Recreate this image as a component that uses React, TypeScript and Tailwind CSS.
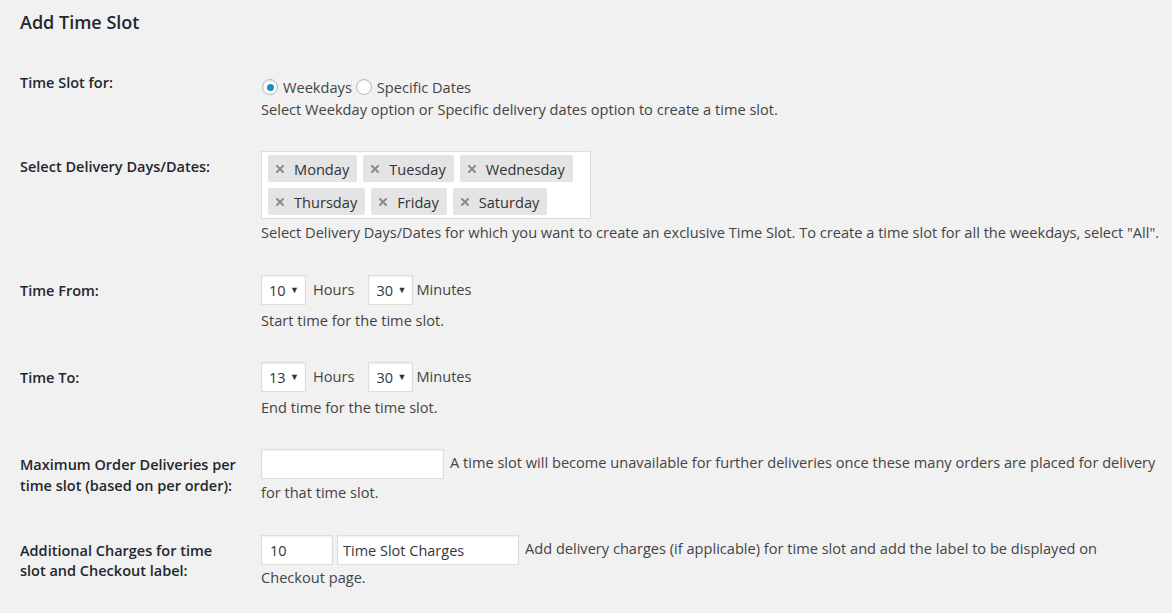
import React from 'react';

const days = [['Monday', 'Tuesday', 'Wednesday'], ['Thursday', 'Friday', 'Saturday']];

function Select({ value }: { value: string }) {
  return (
    <div className="inline-flex h-[30px] w-[45px] shrink-0 items-center justify-between border border-[#ddd] bg-white pl-[7px] pr-[6px] shadow-[inset_0_1px_2px_rgba(0,0,0,0.07)]">
      <span className="pt-[2px] text-[14.5px] text-[#32373c]">{value}</span>
      <span className="text-[9px] text-[#333]">▼</span>
    </div>
  );
}

function Row({
  label,
  children,
  className,
  labelClass = 'pt-[16px] leading-[20px]',
}: {
  label: React.ReactNode;
  children: React.ReactNode;
  className: string;
  labelClass?: string;
}) {
  return (
    <div className={`flex ${className}`}>
      <div className={`w-[241px] shrink-0 pr-[10px] text-[14.5px] font-semibold text-[#23282d] ${labelClass}`}>
        {label}
      </div>
      <div className="flex-1 pt-[10px] text-[14.6px] leading-[20px] text-[#444]">{children}</div>
    </div>
  );
}

function TimeRow({ hours, desc }: { hours: string; desc: string }) {
  return (
    <>
      <div className="flex items-center">
        <Select value={hours} />
        <span className="ml-[7px] mr-[14px] -mt-[2px]">Hours</span>
        <Select value="30" />
        <span className="ml-[3px] -mt-[2px]">Minutes</span>
      </div>
      <p className="mt-[5px]">{desc}</p>
    </>
  );
}

const inputCls =
  'inline-block h-[30px] border border-[#ddd] bg-white align-middle text-[14.5px] text-[#32373c] shadow-[inset_0_1px_2px_rgba(0,0,0,0.07)] outline-none';

export default function App() {
  return (
    <div
      className="min-h-[613px] bg-[#f1f1f1] pl-[20px] pr-[10px]"
      style={{ fontFamily: '"Open Sans", "Noto Sans", sans-serif' }}
    >
      <h2 className="pt-[10px] text-[18px] font-semibold leading-[24px] text-[#23282d]">Add Time Slot</h2>

      <div className="mt-[29px]">
        <Row label="Time Slot for:" className="h-[78px]" labelClass="pt-[10px] leading-[20px]">
          <div className="mt-[4px] flex items-center">
            <span className="mr-[5px] ml-[1px] flex h-[16px] w-[16px] items-center justify-center rounded-full border border-[#b4b9be] bg-white shadow-[inset_0_1px_2px_rgba(0,0,0,0.1)]">
              <span className="h-[7px] w-[7px] rounded-full bg-[#1e8cbe]" />
            </span>
            <span>Weekdays</span>
            <span className="mr-[5px] ml-[4px] h-[16px] w-[16px] rounded-full border border-[#b4b9be] bg-white shadow-[inset_0_1px_2px_rgba(0,0,0,0.1)]" />
            <span>Specific Dates</span>
          </div>
          <p className="mt-[2px]">Select Weekday option or Specific delivery dates option to create a time slot.</p>
        </Row>

        <Row label="Select Delivery Days/Dates:" className="h-[124px]">
          <div className="flex w-[330px] flex-col gap-[6px] border border-[#ddd] bg-white px-[6px] py-[3px]">
            {days.map((row, i) => (
              <div key={i} className="flex gap-[6px]">
                {row.map((d) => (
                  <span
                    key={d}
                    className="flex h-[27px] items-center gap-[10px] rounded-[2px] bg-[#e4e4e4] pr-[8px] pl-[8px] text-[#333]"
                  >
                    <svg width="8" height="8" viewBox="0 0 8 8" className="shrink-0">
                      <path d="M1 1L7 7M7 1L1 7" stroke="#8c8c8c" strokeWidth="2" strokeLinecap="square" />
                    </svg>
                    <span>{d}</span>
                  </span>
                ))}
              </div>
            ))}
          </div>
          <p className="mt-[3px] whitespace-nowrap">
            Select Delivery Days/Dates for which you want to create an exclusive Time Slot. To create a time slot for all
            the weekdays, select "All".
          </p>
        </Row>

        <Row label="Time From:" className="h-[87px]">
          <TimeRow hours="10" desc="Start time for the time slot." />
        </Row>

        <Row label="Time To:" className="h-[87px]">
          <TimeRow hours="13" desc="End time for the time slot." />
        </Row>

        <Row
          label={
            <>
              Maximum Order Deliveries per
              <br />
              time slot (based on per order):
            </>
          }
          className="h-[86px]"
          labelClass="pt-[15px] leading-[21px]"
        >
          <p className="leading-[26px]">
            <input type="text" readOnly defaultValue="" className={`${inputCls} mr-[6px] w-[183px]`} />
            A time slot will become unavailable for further deliveries once these many orders are placed for delivery
            for that time slot.
          </p>
        </Row>

        <Row
          label={
            <>
              Additional Charges for time
              <br />
              slot and Checkout label:
            </>
          }
          className="h-[88px]"
        >
          <p className="leading-[24px]">
            <input type="text" readOnly defaultValue="10" className={`${inputCls} mr-[4px] w-[72px] pl-[8px]`} />
            <input
              type="text"
              readOnly
              defaultValue="Time Slot Charges"
              className={`${inputCls} mr-[6px] w-[182px] pl-[5px]`}
            />
            Add delivery charges (if applicable) for time slot and add the label to be displayed on Checkout page.
          </p>
        </Row>
      </div>
    </div>
  );
}
